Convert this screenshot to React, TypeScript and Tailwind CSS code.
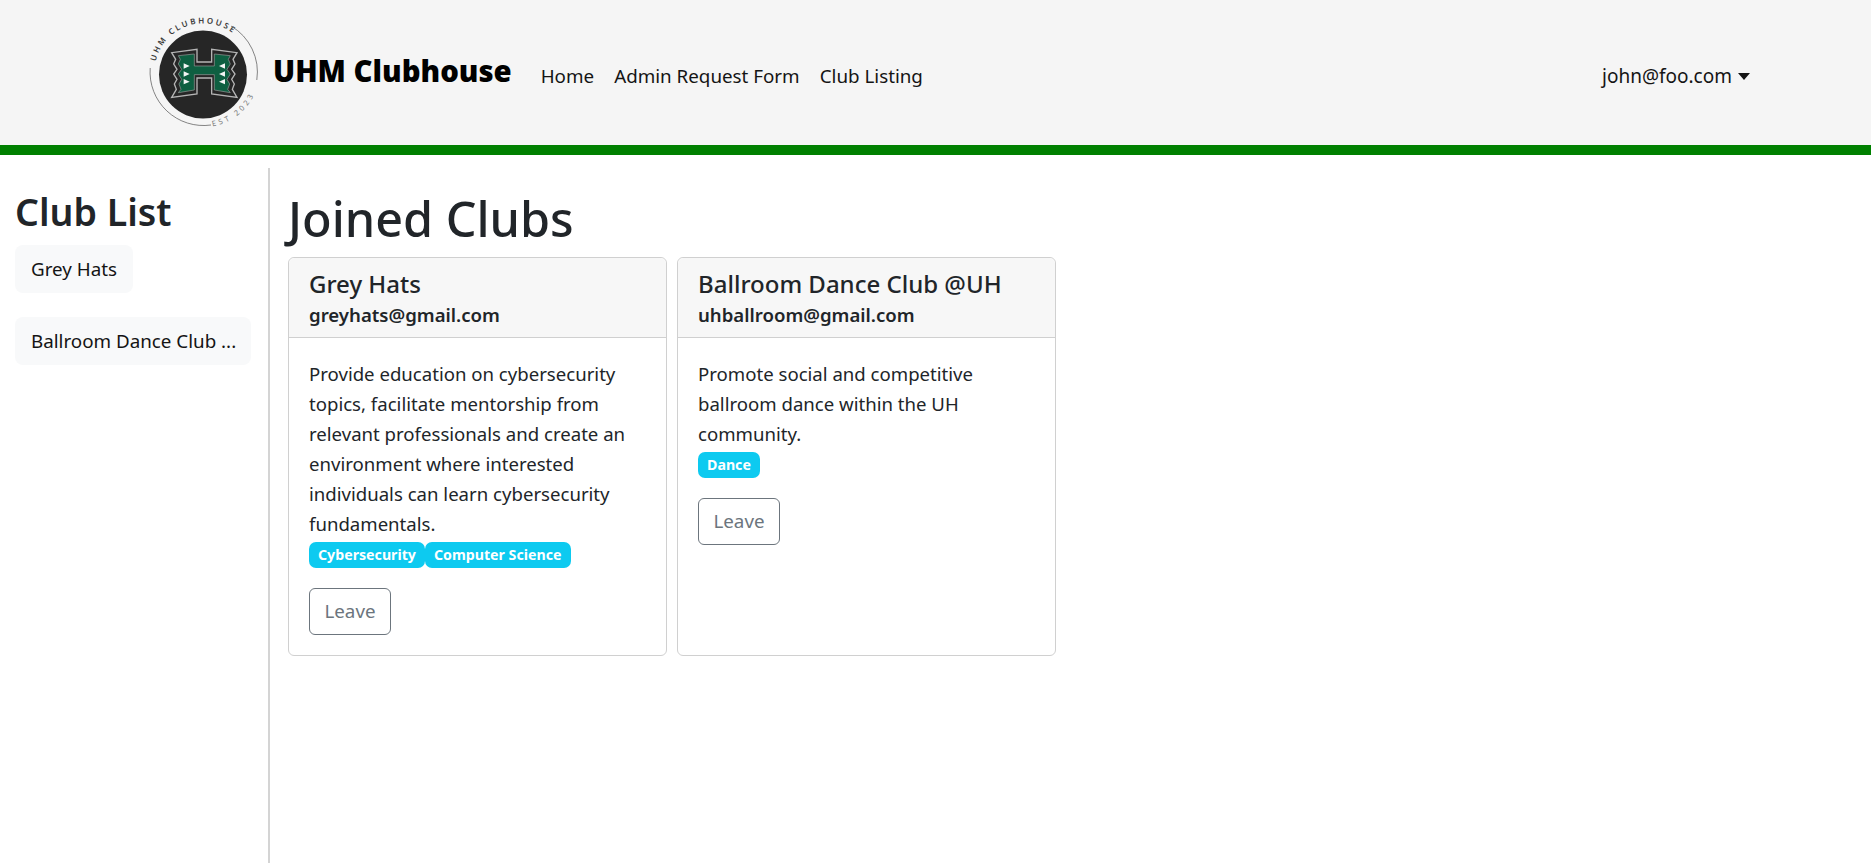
const font = { fontFamily: '"Noto Sans", sans-serif' };

function Logo() {
  return (
    <svg width="120" height="120" viewBox="0 0 120 120" className="mb-[5px] shrink-0">
      <defs>
        <path id="topArc" d="M 10.7 51.5 A 49 49 0 0 1 107.5 62" />
        <path id="botArc" d="M 67.5 116.3 A 55 55 0 0 0 110.5 81" />
      </defs>
      <text fontSize="8" fontWeight="600" letterSpacing="2.3" fill="#3a3a3a" fontFamily="Noto Sans, sans-serif">
        <textPath href="#topArc">UHM CLUBHOUSE</textPath>
      </text>
      <text fontSize="7.5" letterSpacing="3" fill="#777" fontFamily="Noto Sans, sans-serif">
        <textPath href="#botArc">EST 2023</textPath>
      </text>
      <path d="M 5.2 58 A 53.5 53.5 0 0 0 66 115" fill="none" stroke="#666" strokeWidth="0.8" />
      <path d="M 86 16 A 53.5 53.5 0 0 1 111.8 70" fill="none" stroke="#666" strokeWidth="0.8" />
      <circle cx="58" cy="64.5" r="44" fill="#262626" />
      <g transform="translate(20 30) scale(0.3333)">
        <path
          d="M96 66 L96 28 L20 38 L32 58 L26 72 L36 88 L26 102 L36 118 L28 132 L34 148 L20 172 L96 162 L96 114 L140 114 L140 162 L216 172 L202 148 L208 132 L200 118 L210 102 L200 88 L210 72 L204 58 L216 38 L140 28 L140 66 Z"
          fill="#262626"
          stroke="#b5b5b5"
          strokeWidth="4"
        />
        <path
          d="M88 78 L88 42 L40 47 L46 58 L40 72 L50 88 L40 102 L50 118 L42 132 L48 148 L40 158 L88 150 L88 104 L148 104 L148 150 L196 158 L188 148 L194 132 L186 118 L196 102 L186 88 L196 72 L190 58 L196 47 L148 42 L148 78 Z"
          fill="#0e5f41"
          stroke="#9a9a9a"
          strokeWidth="2"
        />
        <path
          d="M56 70 L74 78 L56 86 Z M56 94 L74 102 L56 110 Z M56 117 L74 125 L56 133 Z M180 70 L162 78 L180 86 Z M180 94 L162 102 L180 110 Z M180 117 L162 125 L180 133 Z"
          fill="#f4f4f4"
        />
      </g>
    </svg>
  );
}

function Tag({ children }: { children: string }) {
  return (
    <span className="flex h-[26px] items-center rounded-[7px] bg-[#0dcaf0] px-[9px] text-[14.2px] leading-[1] font-bold text-white">
      {children}
    </span>
  );
}

function Card({ title, email, text, tags }: { title: string; email: string; text: string; tags: string[] }) {
  return (
    <div className="flex w-[379px] flex-col rounded-[6px] border border-[#d0d0d0]">
      <div className="h-[80px] rounded-t-[6px] border-b border-[#d0d0d0] bg-[#f7f7f7] px-[20px] pt-[8px] text-[#212529]">
        <div className="text-[24px] leading-[36px] font-medium">{title}</div>
        <div className="mt-[1px] text-[18.6px] leading-[24px] font-semibold">{email}</div>
      </div>
      <div className="flex flex-1 flex-col items-start px-[20px] pt-[21px] pb-[20px]">
        <p className="text-[18.6px] leading-[30px] text-[#212529]">{text}</p>
        <div className="mt-[3px] flex">
          {tags.map((t) => (
            <Tag key={t}>{t}</Tag>
          ))}
        </div>
        <button className="mt-[20px] h-[47px] w-[82px] rounded-[6px] border border-[#6c757d] text-[18.8px] text-[#6c757d]">
          Leave
        </button>
      </div>
    </div>
  );
}

export default function App() {
  return (
    <div className="flex h-[863px] flex-col overflow-hidden bg-white" style={font}>
      <nav className="flex h-[155px] shrink-0 items-center border-b-[10px] border-[#008000] bg-[#f5f5f5] pr-[121px] pl-[145px]">
        <Logo />
        <div className="ml-[8px] pb-[4px] text-[29.3px] leading-[42px] font-black whitespace-nowrap text-black">UHM Clubhouse</div>
        <div className="mt-[7px] ml-[29px] flex gap-[20px] text-[18.8px] text-[#141414]">
          <span>Home</span>
          <span>Admin Request Form</span>
          <span>Club Listing</span>
        </div>
        <div className="mt-[7px] ml-auto flex items-center text-[19px] text-[#141414]">
          john@foo.com
          <span className="ml-[6px] h-0 w-0 border-x-[6px] border-t-[7px] border-x-transparent border-t-[#141414]" />
        </div>
      </nav>
      <div className="mt-[13px] flex flex-1">
        <aside className="w-[270px] shrink-0 border-r-2 border-[#d4d4d4] pt-[21px] pl-[15px]">
          <h2 className="text-[37.5px] leading-[46px] font-semibold text-[#212529]">Club List</h2>
          <div className="mt-[10px] flex flex-col items-start gap-[24px]">
            <div className="flex h-[48px] items-center rounded-[8px] bg-[#f8f9fa] px-[16px] text-[18.8px] text-[#141414]">Grey Hats</div>
            <div className="flex h-[48px] w-[236px] items-center rounded-[8px] bg-[#f8f9fa] px-[16px] text-[18.8px] whitespace-nowrap text-[#141414]">
              Ballroom Dance Club ...
            </div>
          </div>
        </aside>
        <main className="pt-[18px] pl-[18px]">
          <h1 className="text-[48.5px] leading-[64px] font-medium text-[#212529]">Joined Clubs</h1>
          <div className="mt-[7px] flex h-[399px] gap-[10px]">
            <Card
              title="Grey Hats"
              email="greyhats@gmail.com"
              text="Provide education on cybersecurity topics, facilitate mentorship from relevant professionals and create an environment where interested individuals can learn cybersecurity fundamentals."
              tags={["Cybersecurity", "Computer Science"]}
            />
            <Card
              title="Ballroom Dance Club @UH"
              email="uhballroom@gmail.com"
              text="Promote social and competitive ballroom dance within the UH community."
              tags={["Dance"]}
            />
          </div>
        </main>
      </div>
    </div>
  );
}
